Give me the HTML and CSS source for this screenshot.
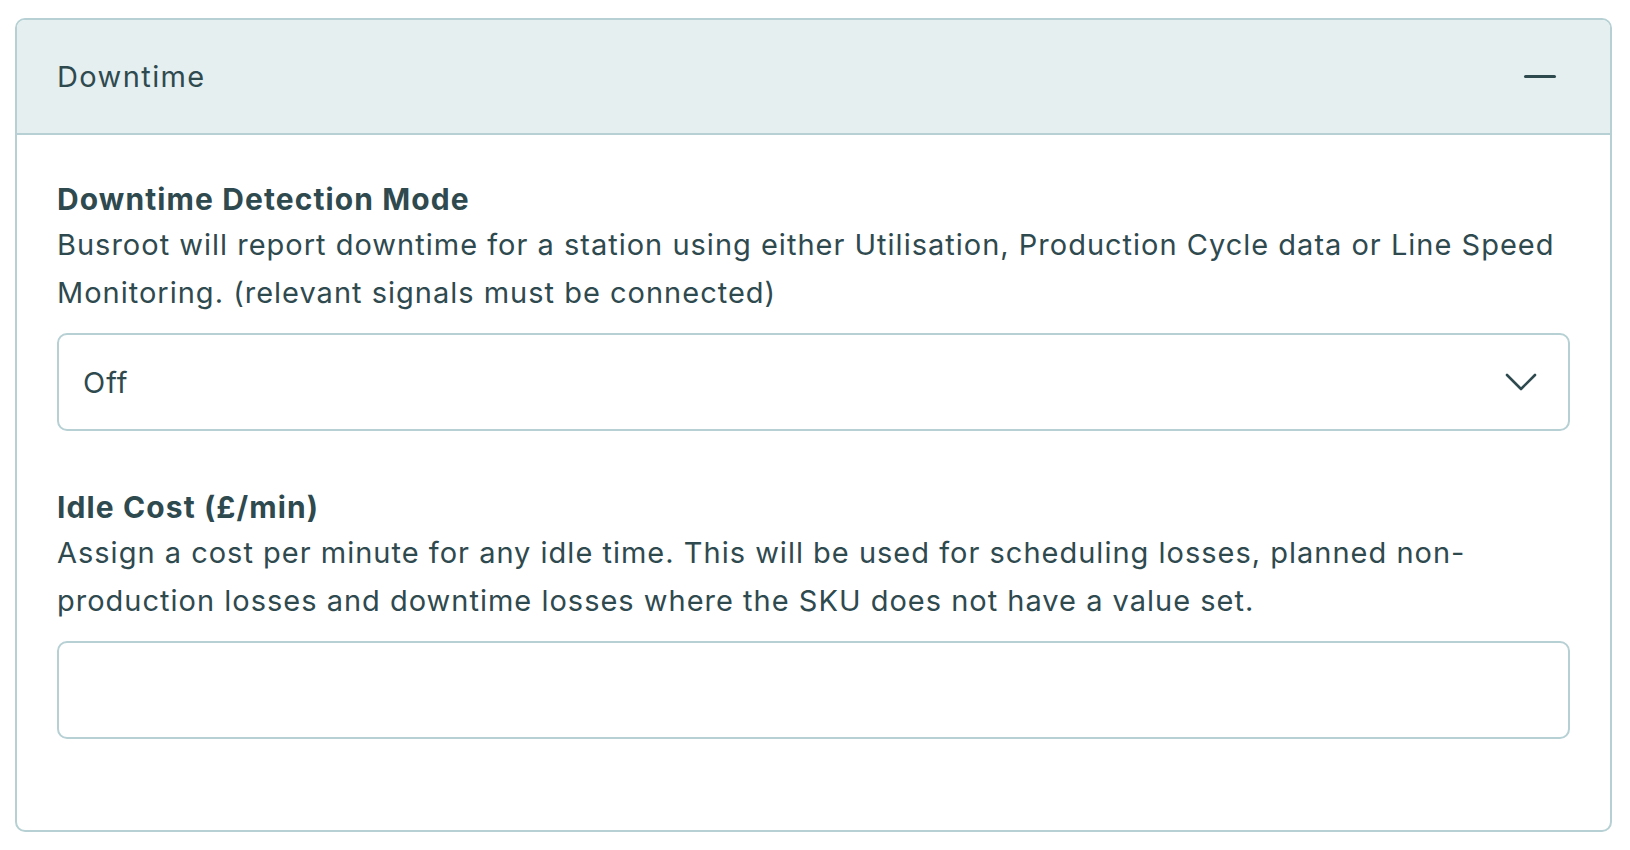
FILE: index.html
```html
<!DOCTYPE html>
<html lang="en">
<head>
    <meta charset="UTF-8">
    <meta name="viewport" content="width=device-width, initial-scale=1.0">
    <title>Station Settings - Downtime</title>
    <link rel="stylesheet" href="styles.css">
</head>
<body>
    <div class="panel">
        <div class="panel-header">
            <span class="panel-title">Downtime</span>
            <span class="collapse-icon"></span>
        </div>

        <div class="panel-body">
            <div class="field">
                <label class="field-label" for="downtimeMode">Downtime Detection Mode</label>
                <p class="field-help">Busroot will report downtime for a station using either Utilisation, Production Cycle data or Line Speed Monitoring. (relevant signals must be connected)</p>
                <div class="select-wrap">
                    <select id="downtimeMode">
                        <option>Off</option>
                        <option>Utilisation</option>
                        <option>Production Cycle</option>
                        <option>Line Speed Monitoring</option>
                    </select>
                    <svg class="chevron" width="32" height="18" viewBox="0 0 32 18">
                        <polyline points="2,2 16,16 30,2" fill="none" stroke="#2f4a4f" stroke-width="2.6" stroke-linecap="round" stroke-linejoin="round"/>
                    </svg>
                </div>
            </div>

            <div class="field">
                <label class="field-label" for="idleCost">Idle Cost (£/min)</label>
                <p class="field-help">Assign a cost per minute for any idle time. This will be used for scheduling losses, planned non-production losses and downtime losses where the SKU does not have a value set.</p>
                <input type="text" id="idleCost">
            </div>
        </div>
    </div>
</body>
</html>
```

FILE: styles.css
```css
body {
    margin: 0;
    background-color: #ffffff;
    font-family: Inter, "Open Sans", sans-serif;
    color: #2f4a4f;
    letter-spacing: 1px;
}

.panel {
    margin: 18px 18px 0 15px;
    border: 2px solid #b6d0d4;
    border-radius: 10px;
    overflow: hidden;
}

.panel-header {
    height: 113px;
    padding: 0 54px 0 40px;
    background-color: #e5eff0;
    border-bottom: 2px solid #b6d0d4;
    display: flex;
    justify-content: space-between;
    align-items: center;
}

.panel-title {
    font-size: 29px;
    letter-spacing: 1.4px;
}

.collapse-icon {
    width: 32px;
    height: 3px;
    border-radius: 2px;
    background-color: #2f4a4f;
}

.panel-body {
    padding: 42px 40px 37px 40px;
}

.field {
    margin-bottom: 54px;
}

.field-label {
    display: block;
    font-size: 30px;
    font-weight: 700;
    line-height: 44px;
    letter-spacing: 1.1px;
}

.field-help {
    margin: 0 0 16px 0;
    font-size: 29px;
    line-height: 48px;
}

.select-wrap {
    position: relative;
}

.select-wrap select,
.field input {
    width: 100%;
    height: 98px;
    padding: 0 24px;
    border: 2px solid #b6d0d4;
    border-radius: 10px;
    background-color: #ffffff;
    font-family: inherit;
    font-size: 29px;
    letter-spacing: 1px;
    color: #2f4a4f;
    box-sizing: border-box;
    appearance: none;
    outline: none;
}

.chevron {
    position: absolute;
    right: 33px;
    top: 40px;
    pointer-events: none;
}
```
